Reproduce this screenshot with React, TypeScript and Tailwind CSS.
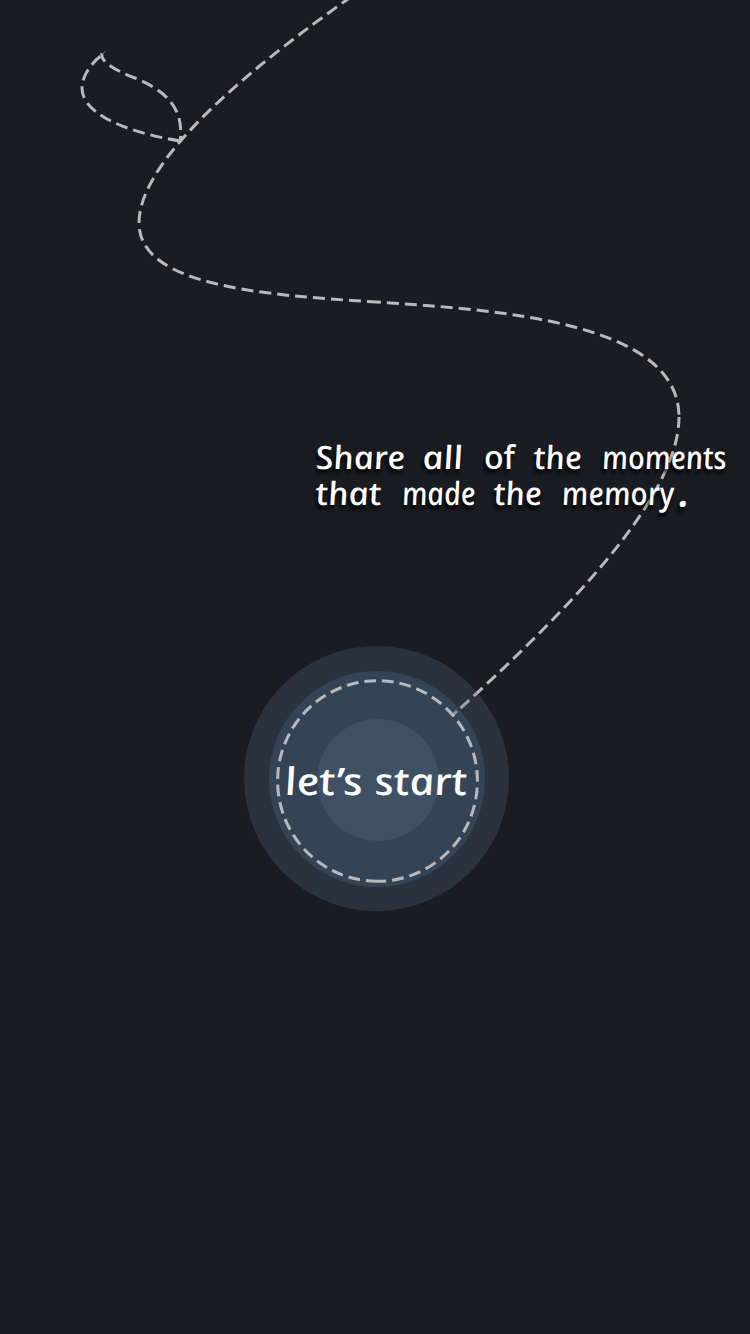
type WordProps = { text: string; className: string };

function Word({ text, className }: WordProps) {
  return (
    <span className={`inline-block shrink-0 origin-bottom-left whitespace-nowrap ${className}`}>
      {text}
    </span>
  );
}

function Trail() {
  return (
    <svg
      className="absolute inset-0 h-[1334px] w-[750px]"
      viewBox="0 0 750 1334"
      fill="none"
      stroke="#b9b9b9"
      strokeWidth="3"
      aria-hidden="true"
    >
      <g strokeDasharray="12 6">
        <path d="M139 223C139 156 262 60 348 -1" />
        <path d="M139 223C139 286 262 295 376 302" strokeDashoffset="12" />
        <path d="M376 302C500 310 679 322 679 417" strokeDashoffset="7" />
        <path d="M679 417C679 502 552 625 453 715" strokeDashoffset="1" />
        <path d="M180 141C120 131 82 112 82 88C82 76 91 63 102 55" />
        <path d="M180 142C185 107 164 90 135 78C112 69 100 61 102 53" strokeDashoffset="6" />
      </g>
      <path d="M102 54L106 51" strokeWidth="1" stroke="#66676a" />
      <g stroke="none">
        <circle cx="376.5" cy="778.5" r="132.5" fill="#567490" fillOpacity="0.26" />
        <circle cx="377" cy="779" r="108" fill="#344454" />
        <circle cx="378" cy="780" r="61" fill="#3e5064" />
      </g>
      <path d="M457 711L453 715" stroke="#8497a8" />
      <path
        d="M377.5 881.3A100 100.3 0 0 1 377.5 680.7A100 100.3 0 0 1 377.5 881.3"
        pathLength="639"
        strokeDasharray="12 6"
      />
    </svg>
  );
}

export default function App() {
  return (
    <main className="relative h-[1334px] w-[750px] overflow-hidden bg-[#1b1c21] text-white [font-family:'Noto_Sans',sans-serif]">
      <Trail />
      <div className="relative flex flex-col pt-[439px]">
        <h1 className="ml-[318px] flex flex-col text-[32px] leading-[36px] font-medium italic [text-shadow:-2px_4px_4px_#000]">
          <span className="flex">
            <Word text="Share" className="w-[107px] scale-x-[1.09] skew-x-[9deg]" />
            <Word text="all" className="w-[59px] scale-x-[1.14] skew-x-[9deg]" />
            <Word text="of" className="w-[52px] scale-x-[1] not-italic" />
            <Word text="the" className="w-[68px] scale-x-[1.04] skew-x-[9deg]" />
            <Word text="moments" className="w-[124px] scale-x-[0.92] skew-x-[9deg]" />
          </span>
          <span className="flex">
            <Word text="that" className="w-[86px] scale-x-[1.1] skew-x-[9deg]" />
            <Word text="made" className="w-[92px] scale-x-[0.9] skew-x-[9deg]" />
            <Word text="the" className="w-[68px] scale-x-[1.04] skew-x-[9deg]" />
            <Word text="memory" className="w-[115px] scale-x-[0.94] skew-x-[9deg]" />
            <Word text="." className="translate-y-[4px] scale-[1.35]" />
          </span>
        </h1>
        <button
          type="button"
          className="mt-[169px] ml-[277px] flex h-[200px] w-[200px] items-center rounded-full pl-[12px] text-[38px] font-medium italic"
        >
          <Word text="let’s" className="w-[90px] scale-x-[1.17] skew-x-[9deg] text-left" />
          <Word text="start" className="scale-x-[1.14] skew-x-[9deg]" />
        </button>
      </div>
    </main>
  );
}
